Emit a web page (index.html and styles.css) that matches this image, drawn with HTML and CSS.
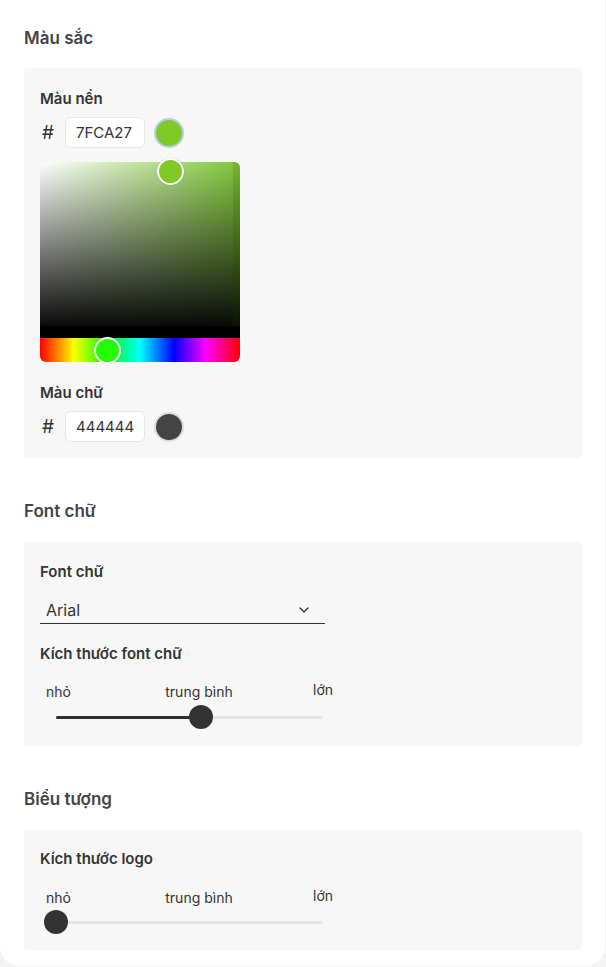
FILE: index.html
```html
<!DOCTYPE html>
<html lang="vi">
<head>
  <meta charset="UTF-8">
  <meta name="viewport" content="width=device-width, initial-scale=1.0">
  <title>Tùy chỉnh giao diện</title>
  <link rel="stylesheet" href="styles.css">
</head>
<body>

  <div class="card">

    <h2 class="section-title first">Màu sắc</h2>
    <div class="panel">
      <div class="label">Màu nền</div>
      <div class="color-row">
        <span class="hash">#</span>
        <div class="hex-input">7FCA27</div>
        <span class="swatch swatch-bg"></span>
      </div>

      <div class="picker">
        <div class="sat-area">
          <span class="sat-strip"></span>
        </div>
        <div class="black-band"></div>
        <div class="hue-bar"></div>
        <span class="handle sat-handle"></span>
        <span class="handle hue-handle"></span>
      </div>

      <div class="label label-gap">Màu chữ</div>
      <div class="color-row">
        <span class="hash">#</span>
        <div class="hex-input">444444</div>
        <span class="swatch swatch-text"></span>
      </div>
    </div>

    <h2 class="section-title">Font chữ</h2>
    <div class="panel panel-font">
      <div class="label">Font chữ</div>
      <div class="select">
        <span>Arial</span>
        <svg class="chevron" width="10" height="6" viewBox="0 0 10 6">
          <path d="M1 1l4 4 4-4" fill="none" stroke="#333" stroke-width="1.4" stroke-linecap="round" stroke-linejoin="round"/>
        </svg>
      </div>

      <div class="label label-gap2">Kích thước font chữ</div>
      <div class="slider">
        <div class="slider-labels">
          <span>nhỏ</span>
          <span class="mid">trung bình</span>
          <span class="big">lớn</span>
        </div>
        <div class="track-row">
          <div class="track">
            <span class="fill" style="width: 54.5%"></span>
            <span class="thumb" style="left: 54.5%"></span>
          </div>
        </div>
      </div>
    </div>

    <h2 class="section-title">Biểu tượng</h2>
    <div class="panel panel-logo">
      <div class="label">Kích thước logo</div>
      <div class="slider slider-logo">
        <div class="slider-labels">
          <span>nhỏ</span>
          <span class="mid">trung bình</span>
          <span class="big">lớn</span>
        </div>
        <div class="track-row">
          <div class="track">
            <span class="fill" style="width: 0%"></span>
            <span class="thumb" style="left: 0%"></span>
          </div>
        </div>
      </div>
    </div>

  </div>

</body>
</html>
```

FILE: styles.css
```css
body {
  margin: 0;
  background-color: #f2f3f2;
  font-family: "Inter", "Noto Sans", sans-serif;
  color: #333;
}

.card {
  background-color: #fff;
  width: 605px;
  box-sizing: border-box;
  padding: 26px 23px 16px 24px;
  border-radius: 0 0 20px 20px;
}

.section-title {
  margin: 41px 0 19px;
  font-size: 17px;
  line-height: 24px;
  font-weight: 600;
  color: #444;
}

.section-title.first {
  margin-top: 0;
  margin-bottom: 18px;
}

.panel {
  background-color: #f7f7f7;
  border-radius: 4px;
  padding: 21px 16px 16px;
}

.panel-font {
  padding-top: 20px;
  padding-bottom: 17px;
}

.panel-logo {
  padding-top: 19px;
}

.label {
  font-size: 15px;
  line-height: 20px;
  font-weight: 600;
  color: #333;
  margin-bottom: 8px;
}

.label-gap {
  margin-top: 21px;
}

.label-gap2 {
  margin-top: 20px;
  margin-bottom: 19px;
}

.slider-logo {
  margin-top: 20px;
}

/* color rows */

.color-row {
  display: flex;
  align-items: center;
  height: 31px;
}

.hash {
  font-size: 19px;
  width: 18px;
  margin-left: 2px;
  color: #333;
}

.hex-input {
  box-sizing: border-box;
  width: 80px;
  height: 31px;
  margin-left: 5px;
  padding-left: 10px;
  background-color: #fff;
  border: 1px solid #e6e6e6;
  border-radius: 6px;
  font-size: 15px;
  line-height: 29px;
  color: #333;
}

.swatch {
  width: 26px;
  height: 26px;
  border-radius: 50%;
  margin-left: 11px;
}

.swatch-bg {
  background-color: #7fca27;
  box-shadow: 0 0 0 2px #b5cdf0;
}

.swatch-text {
  background-color: #444;
  box-shadow: 0 0 0 2px #dcdcdc;
}

/* picker */

.picker {
  position: relative;
  width: 200px;
  margin-top: 14px;
}

.sat-area {
  position: relative;
  height: 164px;
  border-radius: 6px 6px 0 0;
  background:
    linear-gradient(to bottom, rgba(0, 0, 0, 0), #0a0a0a),
    linear-gradient(to right, #fff, #80c83a);
}

.sat-strip {
  position: absolute;
  right: 0;
  top: 0;
  bottom: 0;
  width: 7px;
  border-top-right-radius: 6px;
  background: linear-gradient(to bottom, #76b62e, #0b1206);
}

.black-band {
  height: 12px;
  background-color: #000;
}

.hue-bar {
  height: 24px;
  border-radius: 0 0 6px 6px;
  background: linear-gradient(to right, #f00 0%, #ff0 17%, #0f0 33%, #0ff 50%, #00f 67%, #f0f 83%, #f00 100%);
}

.handle {
  position: absolute;
  width: 23px;
  height: 23px;
  border: 2px solid #fff;
  border-radius: 50%;
  box-shadow: 0 0 1px rgba(0, 0, 0, 0.3);
}

.sat-handle {
  left: 117px;
  top: -4px;
  background-color: #7fca27;
}

.hue-handle {
  left: 54px;
  top: 175px;
  background-color: #22ff00;
}

/* select */

.select {
  box-sizing: border-box;
  width: 285px;
  height: 34px;
  margin-top: 8px;
  padding: 6px 16px 0 6px;
  display: flex;
  justify-content: space-between;
  align-items: center;
  border-bottom: 1.5px solid #333;
  font-size: 16px;
  color: #333;
}

/* slider */

.slider {
  width: 287px;
  margin-left: 6px;
}

.slider-labels {
  display: flex;
  justify-content: space-between;
  align-items: flex-start;
  font-size: 14px;
  line-height: 18px;
  color: #333;
}

.slider-labels .mid {
  margin-left: 14px;
}

.slider-labels .big {
  margin-top: -2px;
}

.track-row {
  height: 24px;
  margin-top: 4px;
  display: flex;
  align-items: center;
}

.slider-logo .track-row {
  margin-top: 3px;
}

.track {
  position: relative;
  width: 266px;
  height: 3px;
  margin-left: 10px;
  background-color: #e4e4e4;
  border-radius: 2px;
}

.fill {
  position: absolute;
  left: 0;
  top: 0;
  height: 3px;
  background-color: #2f2f2f;
  border-radius: 2px;
}

.thumb {
  position: absolute;
  top: -10.5px;
  width: 24px;
  height: 24px;
  margin-left: -12px;
  border-radius: 50%;
  background-color: #333;
}
```
